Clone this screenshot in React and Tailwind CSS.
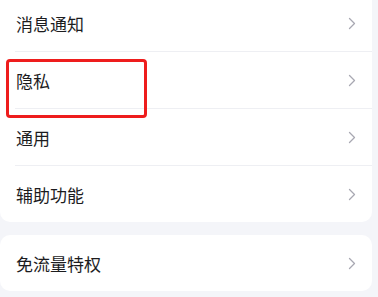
import React from 'react';

const FONT = { fontFamily: '"Noto Sans CJK SC", "Noto Sans", sans-serif' };

// 设置项
const MAIN_ITEMS = ['消息通知', '隐私', '通用', '辅助功能'];

function Chevron() {
  return (
    <svg width="8" height="13" viewBox="0 0 8 13" fill="none" className="shrink-0">
      <path d="M1.5 1.5 L6.5 6.5 L1.5 11.5" stroke="#a8a8b2" strokeWidth="1.3" strokeLinecap="round" strokeLinejoin="round" />
    </svg>
  );
}

function Row({ label, last, height = 'h-[57px]' }) {
  return (
    <div className="pl-[15px]">
      <div className={`flex items-center justify-between pr-[16px] ${height} ${last ? '' : 'border-b border-[#eeeff3]'}`}>
        <span className="pl-px text-[17px] leading-none text-[#1c1c1e]">{label}</span>
        <Chevron />
      </div>
    </div>
  );
}

export default function App() {
  return (
    <div className="relative h-[297px] w-[378px] overflow-hidden bg-[#f4f5f9]" style={FONT}>
      <div className="pr-[6px]">
        <div className="-mt-[5px] rounded-b-[10px] bg-white">
          {MAIN_ITEMS.map((label, i) => (
            <Row key={label} label={label} last={i === MAIN_ITEMS.length - 1} height={i === MAIN_ITEMS.length - 1 ? 'h-[56px]' : 'h-[57px]'} />
          ))}
        </div>
        <div className="mt-[13px] rounded-[10px] bg-white">
          <Row label="免流量特权" last height="h-[56px]" />
        </div>
      </div>
      {/* 标注框 */}
      <div className="absolute left-[6px] top-[59px] h-[59px] w-[141px] rounded-[4px] border-[3px] border-[#ee1d1d]" />
    </div>
  );
}
